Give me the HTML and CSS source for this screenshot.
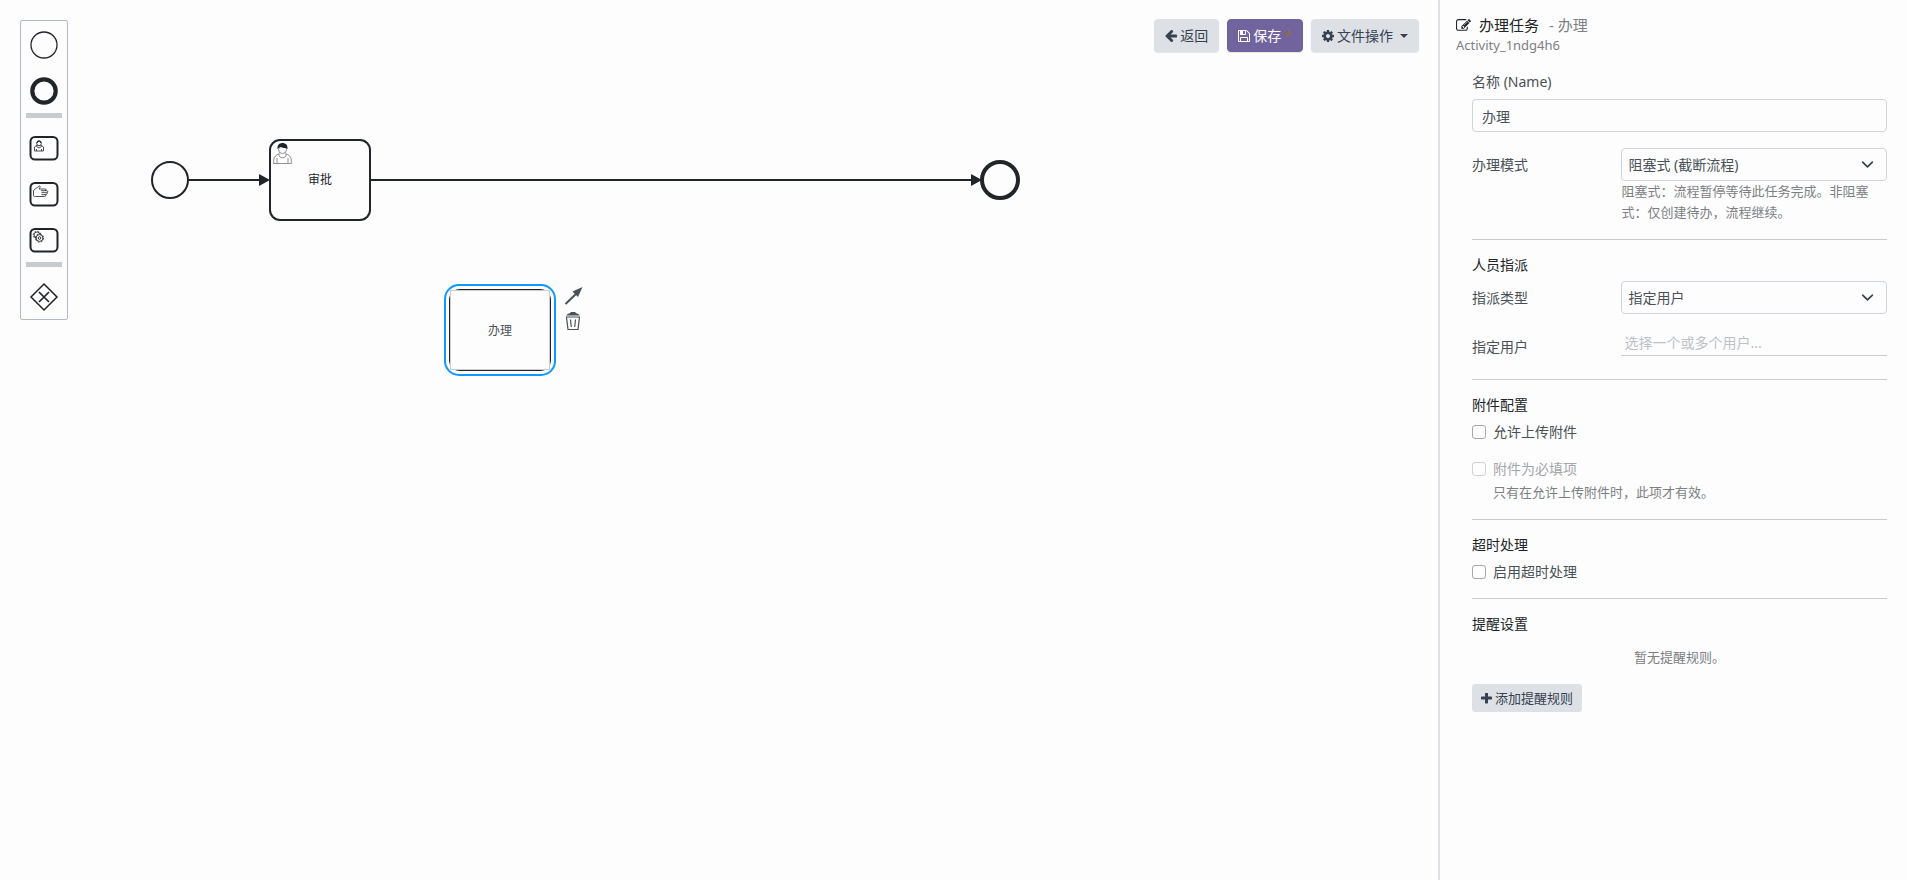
FILE: index.html
```
<!DOCTYPE html>
<html lang="zh-CN">
<head>
    <meta charset="UTF-8">
    <title>流程设计器</title>
    <link rel="stylesheet" href="styles.css">
</head>
<body>
<div class="designer">
    <main class="canvas">
        <svg class="diagram" width="1100" height="400" aria-hidden="true">
            <!-- start event -->
            <circle class="shape" cx="170" cy="180" r="18"/>
            <!-- flows -->
            <path class="shape" d="M188 180H262M370 180H974"/>
            <path class="arrow" d="M259 174L270 180L259 186ZM971 174L982 180L971 186Z"/>
            <!-- user task -->
            <rect class="shape" x="270" y="140" width="100" height="80" rx="10"/>
            <g class="user-mark">
                <path d="M279.500 153.500C276 155 274 156.500 273.700 160V163.500H291.300V160C291 156.500 289 155 285.500 153.500"/>
                <path d="M279 154C278 159 287 159 286 154M277 158V163M288 158V163"/>
                <circle cx="282.500" cy="149.500" r="4"/>
                <path class="arrow" d="M277.500 149C277 145 279.500 143 282.500 143S288 145 287.500 149C285.500 147 284 148.500 282 147.500C280.500 147 279 147.500 277.500 149Z"/>
            </g>
            <text class="node-label" x="320" y="184">审批</text>
            <!-- end event -->
            <circle class="shape end" cx="1000" cy="180" r="18"/>
            <!-- selected task -->
            <rect class="shape" x="450" y="290" width="100" height="80" rx="10"/>
            <rect class="outline" x="445" y="285" width="110" height="90" rx="14"/>
        </svg>
        <input class="direct-edit" type="text" value="办理" aria-label="节点名称">

        <div class="context-pad">
            <button type="button" aria-label="连接">
                <svg width="20" height="20" viewBox="0 0 20 20"><path d="M1.500 18L13 7" stroke="currentColor" stroke-width="2"/><path d="M18.500 1L8.500 5.500L14 11Z" fill="currentColor"/></svg>
            </button>
            <button type="button" aria-label="删除">
                <svg width="20" height="20" viewBox="0 0 20 20"><path d="M2 4.500C4 2.500 6 2.500 7 1H11C12 2.500 14 2.500 16 4.500Z" fill="currentColor"/><path d="M2.500 6H15.500L14 18.500H4ZM6.500 8.500L7.300 16M11.500 8.500L10.700 16" fill="none" stroke="currentColor" stroke-width="1.200"/></svg>
            </button>
        </div>

        <div class="palette">
            <button type="button" aria-label="开始事件">
                <svg viewBox="0 0 46 46"><circle cx="23" cy="24" r="13" stroke-width="1.300"/></svg>
            </button>
            <button type="button" aria-label="结束事件">
                <svg viewBox="0 0 46 46"><circle cx="23" cy="24" r="11.700" stroke-width="4.200"/></svg>
            </button>
            <hr>
            <button type="button" aria-label="用户任务">
                <svg viewBox="0 0 46 46">
                    <rect x="9.500" y="13" width="27" height="22.500" rx="4.500" stroke-width="2"/>
                    <path d="M15.500 21.500L13.500 23V27H22.500V23L20.500 21.500M16 21L15.500 22.500L18 24L20.500 22.500L20 21M15.500 25V27M20.500 25V27" stroke-width="0.800"/>
                    <circle cx="18" cy="19.500" r="2.300" stroke-width="0.900"/>
                    <path d="M16 19C16.500 16 19.500 16 20 19" stroke-width="1.200"/>
                </svg>
            </button>
            <button type="button" aria-label="办理任务">
                <svg viewBox="0 0 46 46">
                    <rect x="9.500" y="13" width="27" height="22.500" rx="4.500" stroke-width="2"/>
                    <path d="M12.500 25.500V21C13 19 16 18 18.500 16C19.500 16 19.500 17 18 19H24C25.500 19 25.500 20.500 24 20.700H20M24 20.700H26C27 21 27 22.500 26 22.700H20.500M26 22.700C26.500 23.500 26 24.500 25 24.700H20.500M24.500 24.700C25 26 24.500 26.500 23.500 26.500H14.500C13.500 26.500 12.500 26.500 12.500 25.500" stroke-width="0.800"/>
                </svg>
            </button>
            <button type="button" aria-label="服务任务">
                <svg viewBox="0 0 46 46">
                    <rect x="9.500" y="13" width="27" height="22.500" rx="4.500" stroke-width="2"/>
                    <circle cx="16" cy="19" r="3" stroke-width="0.800"/>
                    <circle cx="16" cy="19" r="3.800" stroke-width="0.900" stroke-dasharray="1.400 1.580"/>
                    <circle class="gear" cx="18.500" cy="22" r="3.400" stroke-width="0.900"/>
                    <circle cx="18.500" cy="22" r="4.100" stroke-width="1" stroke-dasharray="1.600 1.620"/>
                    <circle cx="18.500" cy="22" r="1.300" stroke-width="0.900"/>
                </svg>
            </button>
            <hr>
            <button type="button" aria-label="网关">
                <svg viewBox="0 0 46 46"><path d="M23 11L36 24L23 37L10 24Z" stroke-width="1.500"/><path d="M18 19L28 29M28 19L18 29" stroke-width="1.700"/></svg>
            </button>
        </div>

        <div class="toolbar">
            <button type="button" class="btn">
                <svg class="fa" viewBox="128 192 1536 1536"><path d="M1664 896v128q0 53-32.500 90.500t-84.500 37.500h-704l293 294q38 36 38 90t-38 90l-75 76q-37 37-90 37-52 0-91-37l-651-652q-37-37-37-90 0-52 37-91l651-650q38-38 91-38 52 0 90 38l75 74q38 38 38 91t-38 91l-293 293h704q52 0 84.500 37.500t32.500 90.500z"/></svg>
                返回
            </button>
            <button type="button" class="btn btn-primary">
                <svg class="fa" viewBox="128 128 1536 1536"><path d="M512 1536h768v-384h-768v384zm896 0h128v-896q0-14-10-38.500t-20-34.500l-281-281q-10-10-34-20t-39-10v416q0 40-28 68t-68 28h-576q-40 0-68-28t-28-68v-416h-128v1280h128v-416q0-40 28-68t68-28h832q40 0 68 28t28 68v416zm-384-928v-320q0-13-9.500-22.500t-22.500-9.500h-192q-13 0-22.500 9.500t-9.500 22.500v320q0 13 9.500 22.500t22.500 9.500h192q13 0 22.500-9.500t9.500-22.500zm640 32v928q0 40-28 68t-68 28h-1344q-40 0-68-28t-28-68v-1344q0-40 28-68t68-28h928q40 0 88 20t76 48l280 280q28 28 48 76t20 88z"/></svg>
                保存
                <span class="dirty">*</span>
            </button>
            <button type="button" class="btn">
                <svg class="fa" viewBox="128 128 1536 1536"><path d="M1152 896q0-106-75-181t-181-75-181 75-75 181 75 181 181 75 181-75 75-181zm512-109v222q0 12-8 23t-20 13l-185 28q-19 54-39 91 35 50 107 138 10 12 10 25t-9 23q-27 37-99 108t-94 71q-12 0-26-9l-138-108q-44 23-91 38-16 136-29 186-7 28-36 28h-222q-14 0-24.500-8.500t-11.500-21.500l-28-184q-49-16-90-37l-141 107q-10 9-25 9-14 0-25-11-126-114-165-168-7-10-7-23 0-12 8-23 15-21 51-66.500t54-70.500q-27-50-41-99l-183-27q-13-2-21-12.500t-8-23.500v-222q0-12 8-23t19-13l186-28q14-46 39-92-40-57-107-138-10-12-10-24 0-10 9-23 26-36 98.500-107.500t94.500-71.500q13 0 26 10l138 107q44-23 91-38 16-136 29-186 7-28 36-28h222q14 0 24.500 8.500t11.500 21.500l28 184q49 16 90 37l142-107q9-9 24-9 13 0 25 10 129 119 165 170 7 8 7 22 0 12-8 23-15 21-51 66.500t-54 70.500q26 50 41 98l183 28q13 2 21 12.500t8 23.500z"/></svg>
                文件操作
                <span class="caret"></span>
            </button>
        </div>
    </main>

    <aside class="panel">
        <header class="panel-header">
            <h1 class="panel-title">
                <svg class="fa fa-edit" viewBox="0 128 1792 1536"><path d="M888 1184l116-116-152-152-116 116v56h96v96h56zm440-720q-16-16-33 1l-350 350q-17 17-1 33t33-1l350-350q17-17 1-33zm80 594v190q0 119-84.500 203.500t-203.500 84.500h-832q-119 0-203.500-84.500t-84.500-203.500v-832q0-119 84.500-203.500t203.500-84.500h832q63 0 117 25 15 7 18 23 3 17-9 29l-49 49q-14 14-32 8-23-6-45-6h-832q-66 0-113 47t-47 113v832q0 66 47 113t113 47h832q66 0 113-47t47-113v-126q0-13 9-22l64-64q15-15 35-7t20 29zm-96-738l288 288-672 672h-288v-288zm444 132l-92 92-288-288 92-92q28-28 68-28t68 28l152 152q28 28 28 68t-28 68z"/></svg>
                <span>办理任务</span>
                <span class="panel-name">- 办理</span>
            </h1>
            <div class="panel-id">Activity_1ndg4h6</div>
        </header>

        <form class="panel-form">
            <label class="name-label" for="name">名称 (Name)</label>
            <input class="form-control" type="text" id="name" value="办理">

            <div class="row">
                <label for="mode">办理模式</label>
                <select class="form-select" id="mode">
                    <option>阻塞式 (截断流程)</option>
                    <option>非阻塞式</option>
                </select>
                <p class="help mode-help">阻塞式：流程暂停等待此任务完成。非阻塞式：仅创建待办，流程继续。</p>
            </div>

            <hr>
            <h2>人员指派</h2>
            <div class="row row-first">
                <label for="assign">指派类型</label>
                <select class="form-select" id="assign">
                    <option>指定用户</option>
                    <option>指定角色</option>
                </select>
            </div>
            <div class="row">
                <label for="users">指定用户</label>
                <input class="tag-input" type="text" id="users" placeholder="选择一个或多个用户...">
            </div>

            <hr>
            <h2>附件配置</h2>
            <div class="check">
                <input type="checkbox" id="allow">
                <label for="allow">允许上传附件</label>
            </div>
            <div class="check check-next">
                <input type="checkbox" id="required" disabled>
                <label for="required">附件为必填项</label>
            </div>
            <p class="help check-help">只有在允许上传附件时，此项才有效。</p>

            <hr>
            <h2>超时处理</h2>
            <div class="check">
                <input type="checkbox" id="timeout">
                <label for="timeout">启用超时处理</label>
            </div>

            <hr>
            <h2>提醒设置</h2>
            <p class="help empty">暂无提醒规则。</p>
            <button type="button" class="btn btn-sm">
                <svg class="fa" viewBox="192 192 1408 1408"><path d="M1600 736v192q0 40-28 68t-68 28h-416v416q0 40-28 68t-68 28h-192q-40 0-68-28t-28-68v-416h-416q-40 0-68-28t-28-68v-192q0-40 28-68t68-28h416v-416q0-40 28-68t68-28h192q40 0 68 28t28 68v416h416q40 0 68 28t28 68z"/></svg>
                添加提醒规则
            </button>
        </form>
    </aside>
</div>
</body>
</html>
```
FILE: styles.css
```
* {
    box-sizing: border-box;
}

body {
    margin: 0;
    background-color: #fdfdfd;
    color: #495057;
    font: 14px/21px "Noto Sans", "Noto Sans CJK SC", sans-serif;
}

button, input, select {
    font: inherit;
    color: inherit;
}

.designer {
    display: grid;
    grid-template-columns: minmax(0, 1fr) 469px;
    min-height: 100vh;
}

/* canvas */

.canvas {
    position: relative;
    overflow: hidden;
}

.diagram {
    position: absolute;
    left: 0;
    top: 0;
}

.shape {
    fill: none;
    stroke: #212529;
    stroke-width: 2;
}

.end {
    stroke-width: 4;
}

.arrow {
    fill: #212529;
    stroke: none;
}

.outline {
    fill: none;
    stroke: #0d99ff;
    stroke-width: 2;
}

.user-mark {
    fill: none;
    stroke: #212529;
    stroke-width: 0.5;
}

.node-label {
    font-size: 12px;
    text-anchor: middle;
    fill: #212529;
}

.direct-edit {
    position: absolute;
    left: 450px;
    top: 290px;
    width: 100px;
    height: 80px;
    padding: 0;
    border: 1px solid #ccc;
    background-color: #fdfdfd;
    font-size: 12px;
    text-align: center;
}

.context-pad {
    position: absolute;
    left: 564px;
    top: 286px;
    display: grid;
    gap: 5px;
}

.context-pad button,
.palette button {
    display: block;
    padding: 0;
    border: 0;
    background: none;
}

.context-pad svg,
.palette svg {
    display: block;
}

.palette {
    position: absolute;
    left: 20px;
    top: 20px;
    width: 48px;
    border: 1px solid #b3b9c8;
    border-radius: 2px;
}

.palette svg {
    width: 46px;
    height: 46px;
    fill: none;
    stroke: #212529;
}

.palette .gear {
    fill: #fdfdfd;
}

.palette hr {
    height: 5px;
    margin: 0 5px 6px;
    border: 0;
    background-color: #c9cccf;
}

.toolbar {
    position: absolute;
    top: 19px;
    right: 19px;
    display: flex;
    gap: 8px;
}

.btn {
    display: inline-flex;
    align-items: center;
    gap: 3px;
    padding: 5px 10px;
    border: 1px solid #dde1e6;
    border-radius: 4px;
    background-color: #dde1e6;
    color: #374151;
    white-space: nowrap;
    box-shadow: 0 1px 1px rgba(0, 0, 0, 0.1);
}

.btn-primary {
    border-color: #71639e;
    background-color: #71639e;
    color: #fff;
}

.btn-sm {
    padding: 3px 8px;
    border-radius: 3px;
    font-size: 13px;
    line-height: 20px;
    box-shadow: none;
}

.fa {
    width: 12px;
    height: 12px;
    fill: currentColor;
}

.btn-sm .fa {
    width: 11px;
    height: 11px;
}

.dirty {
    color: #94693b;
}

.caret {
    margin-left: 4px;
    border: 4px solid transparent;
    border-top-color: currentColor;
    border-bottom: 0;
}

/* properties panel */

.panel {
    border-left: 2px solid #dde1e6;
    padding: 15px 20px 20px 16px;
}

.panel-title {
    display: flex;
    align-items: center;
    gap: 8px;
    margin: 0;
    color: #212529;
    font-size: 15px;
    font-weight: 400;
    line-height: 21px;
}

.fa-edit {
    width: 15px;
    height: 13px;
}

.panel-name {
    margin-left: 2px;
    color: #7c7f83;
}

.panel-id {
    color: #7c7f83;
    font-size: 13px;
    line-height: 18px;
}

.panel-form {
    padding: 17px 0 0 16px;
}

.name-label {
    display: block;
    margin-bottom: 7px;
}

.form-control,
.form-select {
    display: block;
    width: 100%;
    height: 33px;
    padding: 0 9px;
    border: 1px solid #ced4da;
    border-radius: 4px;
    background-color: transparent;
}

.form-select {
    appearance: none;
    padding: 0 32px 0 6px;
    background: url("data:image/svg+xml,%3csvg xmlns='http://www.w3.org/2000/svg' viewBox='0 0 16 16'%3e%3cpath fill='none' stroke='%23374151' stroke-width='2' stroke-linecap='round' stroke-linejoin='round' d='M2 5l6 6 6-6'/%3e%3c/svg%3e") no-repeat right 12px center / 13px 13px;
}

.row {
    display: grid;
    grid-template-columns: 36% 64%;
    margin-top: 16px;
}

.row-first {
    margin-top: 0;
}

.row label {
    line-height: 33px;
}

.tag-input {
    width: 100%;
    height: 26px;
    padding: 0 3px;
    border: 0;
    border-bottom: 1px solid #c9cccf;
    background: none;
}

.tag-input::placeholder {
    color: #bcc1c7;
}

.help {
    margin: 0;
    color: #7c7f83;
    font-size: 13px;
    line-height: 21px;
}

.mode-help {
    grid-column: 2;
}

.panel-form hr {
    height: 1px;
    margin: 16px 0;
    border: 0;
    background-color: #c9cccf;
}

.panel-form h2 {
    margin: 0 0 7px;
    color: #212529;
    font-size: 14px;
    font-weight: 400;
    line-height: 18px;
}

.check {
    display: flex;
    align-items: center;
    gap: 7px;
}

.check-next {
    margin-top: 16px;
}

.check input {
    appearance: none;
    width: 14px;
    height: 14px;
    margin: 0;
    border: 1px solid #a5a7aa;
    border-radius: 3px;
}

.check input:disabled,
.check input:disabled + label {
    opacity: 0.5;
}

.check-help {
    margin-top: 3px;
    padding-left: 21px;
}

.empty {
    padding: 7px 0 16px;
    text-align: center;
}
```
